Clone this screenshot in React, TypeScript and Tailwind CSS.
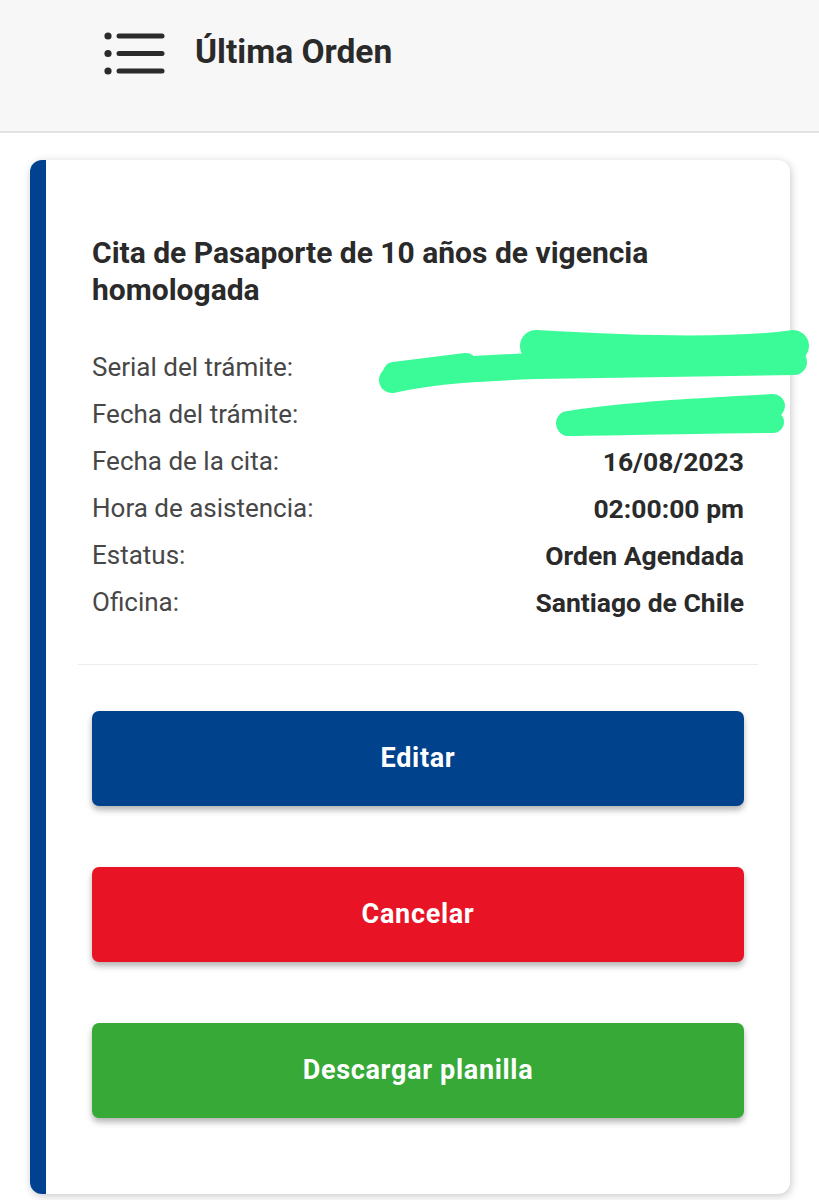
import React from 'react';

const rows: { label: string; value: string }[] = [
  { label: 'Serial del trámite:', value: '' },
  { label: 'Fecha del trámite:', value: '' },
  { label: 'Fecha de la cita:', value: '16/08/2023' },
  { label: 'Hora de asistencia:', value: '02:00:00 pm' },
  { label: 'Estatus:', value: 'Orden Agendada' },
  { label: 'Oficina:', value: 'Santiago de Chile' },
];

function MenuIcon() {
  return (
    <svg width="62" height="48" viewBox="0 0 62 48" fill="none">
      <circle cx="4" cy="6" r="3.6" fill="#2b2b2b" />
      <circle cx="4" cy="23.5" r="3.6" fill="#2b2b2b" />
      <circle cx="4" cy="41" r="3.6" fill="#2b2b2b" />
      <g stroke="#2b2b2b" strokeWidth="5" strokeLinecap="round">
        <line x1="15" y1="6" x2="58" y2="6" />
        <line x1="15" y1="23.5" x2="58" y2="23.5" />
        <line x1="15" y1="41" x2="58" y2="41" />
      </g>
    </svg>
  );
}

// the green marker strokes that hide the serial and date
function Scribbles() {
  return (
    <svg
      className="absolute left-0 top-0 pointer-events-none overflow-visible"
      width="744"
      height="300"
      viewBox="0 0 744 300"
      fill="none"
    >
      <g stroke="#3bfb98" strokeLinecap="round" strokeLinejoin="round">
        <path d="M346 220 C 390 210, 440 208, 490 206 L 748 202" strokeWidth="26" />
        <path d="M490 186 C 590 192, 690 194, 747 186" strokeWidth="32" />
        <path d="M348 213 L 420 204" strokeWidth="22" />
        <path d="M522 263 C 590 252, 670 250, 727 246" strokeWidth="24" />
        <path d="M522 265 C 600 264, 680 262, 727 262" strokeWidth="22" />
      </g>
    </svg>
  );
}

function Button({ label, color }: { label: string; color: string }) {
  return (
    <button
      className={`w-full h-[95px] rounded-[7px] text-white text-[27px] font-bold tracking-wide shadow-[0_4px_6px_rgba(0,0,0,0.3)] ${color}`}
    >
      {label}
    </button>
  );
}

export default function App() {
  return (
    <div className="min-h-[1200px] bg-white font-['Roboto',sans-serif] text-[#2b2b2b]">
      {/* Header */}
      <header className="h-[133px] bg-[#f7f7f7] border-b-2 border-[#e2e2e2] flex items-center pb-[24px]">
        <div className="ml-[104px]">
          <MenuIcon />
        </div>
        <h1 className="ml-[29px] mb-[2px] text-[33.5px] font-bold text-[#2a2a2a]">Última Orden</h1>
      </header>

      {/* Card */}
      <div className="pt-[27px] pl-[30px]">
        <div className="relative w-[760px] bg-white rounded-[12px] border-l-[16px] border-[#004290] shadow-[1px_2px_8px_rgba(0,0,0,0.22)] pt-[74px] pb-[76px]">
          <div className="px-[46px]">
            <h2 className="text-[30px] leading-[37px] font-bold text-[#2a2a2a] pr-[20px]">
              Cita de Pasaporte de 10 años de vigencia homologada
            </h2>

            <div className="mt-[36px] flex flex-col">
              {rows.map((r) => (
                <div key={r.label} className="flex justify-between items-center h-[47px]">
                  <span className="text-[26px] text-[#474747]">{r.label}</span>
                  <span className="text-[26.5px] font-bold text-[#2a2a2a]">{r.value}</span>
                </div>
              ))}
            </div>
          </div>

          <div className="mx-[32px] mt-[38px] border-t border-[#ececec]" />

          <div className="px-[46px] mt-[46px] flex flex-col gap-[61px]">
            <Button label="Editar" color="bg-[#00428c]" />
            <Button label="Cancelar" color="bg-[#e81426]" />
            <Button label="Descargar planilla" color="bg-[#36a937]" />
          </div>

          <Scribbles />
        </div>
      </div>
    </div>
  );
}
